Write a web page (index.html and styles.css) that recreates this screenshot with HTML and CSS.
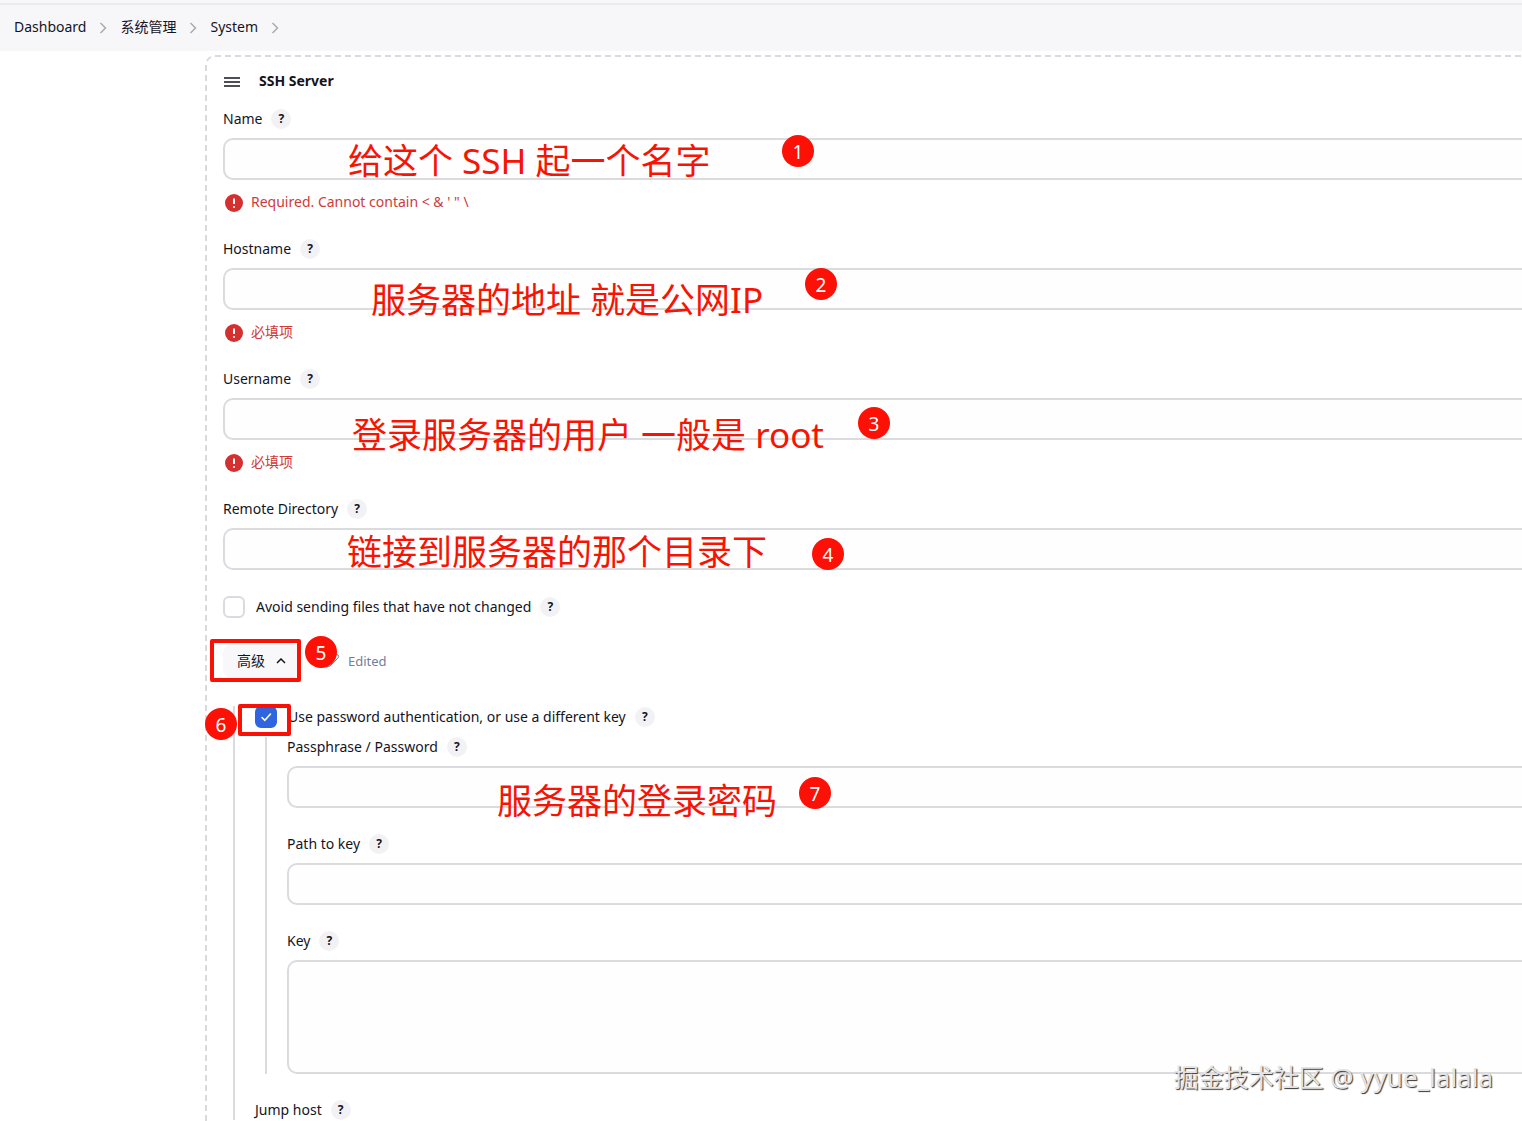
FILE: index.html
```html
<!DOCTYPE html>
<html lang="zh-CN">
<head>
<meta charset="utf-8">
<meta name="viewport" content="width=device-width, initial-scale=1">
<title>System - SSH Server</title>
<link rel="stylesheet" href="styles.css">
</head>
<body>
<header class="top-strip"></header>
<nav class="breadcrumbs" aria-label="Breadcrumb">
  <a href="#">Dashboard</a>
  <svg class="crumb-arrow" viewBox="0 0 8 12"><path d="M1.5 1 6.5 6 1.5 11"/></svg>
  <a href="#" class="crumb-cjk">系统管理</a>
  <svg class="crumb-arrow" viewBox="0 0 8 12"><path d="M1.5 1 6.5 6 1.5 11"/></svg>
  <a href="#">System</a>
  <svg class="crumb-arrow" viewBox="0 0 8 12"><path d="M1.5 1 6.5 6 1.5 11"/></svg>
</nav>

<main class="content">
  <form class="panel">
    <div class="panel-title">
      <svg class="drag" viewBox="0 0 16 10"><path d="M0 1h16M0 5h16M0 9h16"/></svg>
      <h2>SSH Server</h2>
    </div>

    <div class="field">
      <div class="label-row"><label for="name">Name</label><button type="button" class="help">?</button></div>
      <input class="text-box" id="name" type="text">
      <p class="error"><svg viewBox="0 0 18 18"><circle cx="9" cy="9" r="9"/><path d="M9 4.500v5.500M9 12.200v1.600"/></svg><span>Required. Cannot contain &lt; &amp; ' " \</span></p>
    </div>
    <div class="field">
      <div class="label-row"><label for="host">Hostname</label><button type="button" class="help">?</button></div>
      <input class="text-box" id="host" type="text">
      <p class="error"><svg viewBox="0 0 18 18"><circle cx="9" cy="9" r="9"/><path d="M9 4.500v5.500M9 12.200v1.600"/></svg><span>必填项</span></p>
    </div>
    <div class="field">
      <div class="label-row"><label for="user">Username</label><button type="button" class="help">?</button></div>
      <input class="text-box" id="user" type="text">
      <p class="error"><svg viewBox="0 0 18 18"><circle cx="9" cy="9" r="9"/><path d="M9 4.500v5.500M9 12.200v1.600"/></svg><span>必填项</span></p>
    </div>
    <div class="field">
      <div class="label-row"><label for="dir">Remote Directory</label><button type="button" class="help">?</button></div>
      <input class="text-box" id="dir" type="text">
    </div>

    <div class="check-row">
      <input class="check" type="checkbox" id="avoid"><label for="avoid">Avoid sending files that have not changed</label><button type="button" class="help">?</button>
    </div>

    <div class="advanced-row">
      <button type="button" class="advanced">高级<svg viewBox="0 0 10 6"><path d="M1 5 5 1 9 5"/></svg></button>
      <span class="edited"><svg viewBox="0 0 16 16"><path d="M2 14l1-4 8-8a2 2 0 0 1 3 3l-8 8z"/></svg>Edited</span>
    </div>

    <section class="nested">
      <div class="check-row">
        <input class="check" type="checkbox" id="pw" checked><label for="pw">Use password authentication, or use a different key</label><button type="button" class="help">?</button>
      </div>
      <div class="nested-inner">
        <div class="field">
          <div class="label-row"><label for="pass">Passphrase / Password</label><button type="button" class="help">?</button></div>
          <input class="text-box" id="pass" type="password">
        </div>
        <div class="field">
          <div class="label-row"><label for="path">Path to key</label><button type="button" class="help">?</button></div>
          <input class="text-box" id="path" type="text">
        </div>
        <div class="field">
          <div class="label-row"><label for="key">Key</label><button type="button" class="help">?</button></div>
          <textarea class="text-box area" id="key"></textarea>
        </div>
      </div>
      <div class="label-row jump"><span>Jump host</span><button type="button" class="help">?</button></div>
    </section>
  </form>
</main>

<div class="notes">
  <span class="note note-1">给这个 SSH 起一个名字</span>
  <span class="note note-2">服务器的地址 就是公网IP</span>
  <span class="note note-3">登录服务器的用户 一般是 root</span>
  <span class="note note-4">链接到服务器的那个目录下</span>
  <span class="note note-7">服务器的登录密码</span>
  <span class="frame frame-5"></span>
  <span class="frame frame-6"></span>
  <span class="pin pin-1">1</span>
  <span class="pin pin-2">2</span>
  <span class="pin pin-3">3</span>
  <span class="pin pin-4">4</span>
  <span class="pin pin-5">5</span>
  <span class="pin pin-6">6</span>
  <span class="pin pin-7">7</span>
  <span class="watermark">掘金技术社区 <span class="handle">@ yyue_lalala</span></span>
</div>
</body>
</html>
```
FILE: styles.css
```css
* { box-sizing: border-box; }

body {
  margin: 0;
  position: relative;
  min-height: 100vh;
  display: flex;
  flex-direction: column;
  overflow: hidden;
  background: #fff;
  color: #14141f;
  font: 14px/20px "Noto Sans", "Noto Sans CJK SC", sans-serif;
}

.top-strip {
  height: 5px;
  background: #f8f8f8;
  border-bottom: 2px solid #ebebed;
}

.breadcrumbs {
  display: flex;
  align-items: center;
  gap: 13px;
  height: 46px;
  padding: 0 14px 2px;
  background: #f7f7fa;
}
.breadcrumbs a { color: inherit; text-decoration: none; }
.crumb-arrow { width: 8px; height: 12px; margin-top: 2px; fill: none; stroke: #a9a9b0; stroke-width: 1.5; }

.content {
  flex: 1;
  display: flex;
  padding: 4px 0 0 205px;
}

/* The panel runs off the right and bottom edges of the window */
.panel {
  flex: 1;
  border: 2px dashed #d9dadd;
  border-width: 2px 0 0 2px;
  border-top-left-radius: 10px;
  padding: 14px 0 0 16px;
}

.panel-title { display: flex; align-items: center; gap: 19px; height: 20px; margin: 0 0 18px 1px; }
.panel-title h2 { margin: 0; font-size: 14px; line-height: 20px; }
.drag { width: 16px; height: 10px; margin-top: 2px; fill: none; stroke: #14141f; stroke-width: 1.5; }

.label-row { display: flex; align-items: center; gap: 9px; height: 20px; margin-bottom: 9px; }

.help {
  width: 20px;
  height: 20px;
  padding: 0;
  border: 0;
  border-radius: 50%;
  background: #f2f2f5;
  color: #14141f;
  font: bold 12px/20px "Noto Sans", sans-serif;
}

.field { margin-bottom: 26px; }

.text-box {
  display: block;
  width: 100%;
  height: 42px;
  padding: 8px 12px;
  border: 2px solid #d9dbde;
  border-right: 0;
  border-radius: 10px 0 0 10px;
  background: #fefefe;
  font: inherit;
  resize: none;
}
.area { height: 114px; }

.error {
  display: flex;
  align-items: center;
  gap: 8px;
  height: 20px;
  margin: 13px 0 0 2px;
  color: #cf3a3a;
}
.error span { padding-bottom: 2px; }
.error svg { width: 18px; height: 18px; fill: #d3302f; stroke: #fff; stroke-width: 0; }
.error path { stroke-width: 2; }

.check-row { display: flex; align-items: center; height: 22px; }
.check-row .help { margin-left: 9px; }
.check {
  appearance: none;
  width: 22px;
  height: 22px;
  margin: 0 11px 0 0;
  border: 2px solid #d9dbde;
  border-radius: 6px;
  background: #fff;
}
.check:checked {
  border-color: #2f66df;
  background: #2f66df url("data:image/svg+xml,%3Csvg xmlns='http://www.w3.org/2000/svg' viewBox='0 0 18 18'%3E%3Cpath d='M5 9.5l2.8 2.8L13.500 6' fill='none' stroke='white' stroke-width='1.6' stroke-linecap='round'/%3E%3C/svg%3E") center / 18px 18px;
}

.advanced-row { display: flex; align-items: center; gap: 24px; margin: 25px 0 27px; }
.advanced {
  display: flex;
  align-items: center;
  gap: 11px;
  height: 36px;
  padding: 0 14px;
  border: 0;
  border-radius: 10px;
  background: #f8f8fa;
  color: inherit;
  font: inherit;
}
.advanced svg { width: 10px; height: 6px; fill: none; stroke: #14141f; stroke-width: 1.5; }
.edited { display: flex; align-items: center; gap: 8px; color: #72809c; font-size: 13px; }
.edited svg { width: 16px; height: 16px; fill: none; stroke: #72809c; stroke-width: 1; }

.nested { margin-left: 10px; padding-left: 20px; border-left: 2px solid #d9dbde; }
.nested-inner { margin: 9px 0 26px 10px; padding-left: 20px; border-left: 2px solid #d9dbde; }
.nested-inner .field:last-child { margin-bottom: 0; }
.jump { margin-bottom: 2px; }

/* Hand-placed annotations over the form */
.notes { position: absolute; inset: 0; pointer-events: none; }
.note, .frame, .pin, .watermark { position: absolute; white-space: nowrap; }
.note {
  color: #f81404;
  font: 35px/48px "Noto Sans", "Noto Sans CJK SC", sans-serif;
}
.note-1 { left: 348px; top: 137px; }
.note-2 { left: 371px; top: 276px; }
.note-3 { left: 352px; top: 411px; }
.note-4 { left: 347px; top: 528px; }
.note-7 { left: 497px; top: 777px; }

.frame { border: 4px solid #f91106; border-radius: 2px; }
.frame-5 { left: 210px; top: 639px; width: 91px; height: 43px; }
.frame-6 { left: 238px; top: 704px; width: 53px; height: 32px; }

.pin {
  width: 32px;
  height: 32px;
  border-radius: 50%;
  background: #fd1005;
  color: #fff;
  font-size: 19px;
  line-height: 34px;
  text-align: center;
}
.pin-1 { left: 782px; top: 135px; }
.pin-2 { left: 805px; top: 268px; }
.pin-3 { left: 858px; top: 407px; }
.pin-4 { left: 812px; top: 538px; }
.pin-5 { left: 305px; top: 636px; }
.pin-6 { left: 205px; top: 708px; }
.pin-7 { left: 799px; top: 777px; }

.watermark {
  right: 29px;
  bottom: 28px;
  color: #e4e4e6;
  font-size: 25px;
  line-height: 34px;
  text-shadow: 1px 1px 1px #333;
}
.handle { font-size: 26px; }
```
